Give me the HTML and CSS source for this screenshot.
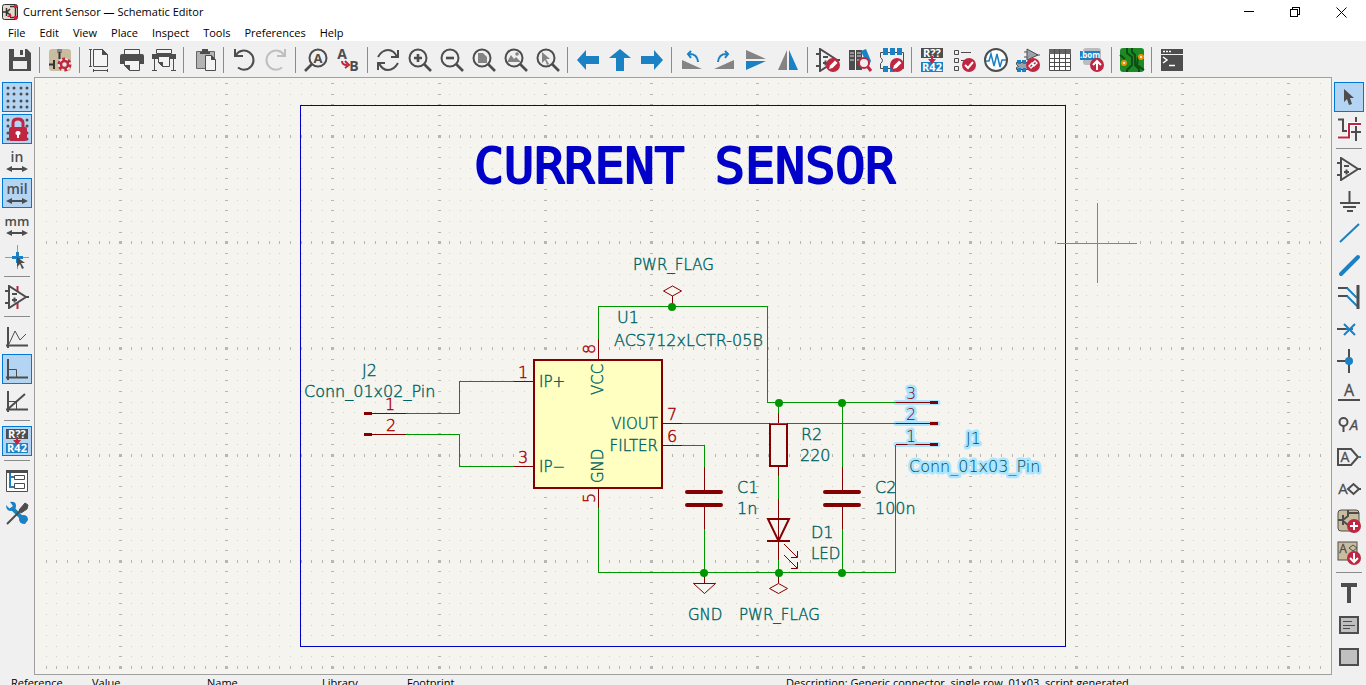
FILE: index.html
```html
<!DOCTYPE html>
<html lang="en">
<head>
<meta charset="utf-8">
<title>Current Sensor — Schematic Editor</title>
<link rel="stylesheet" href="styles.css">
</head>
<body>
<svg class="defs" aria-hidden="true">
  <symbol id="annotate" viewBox="0 0 24 24">
    <rect x="1" y="0" width="22" height="10" fill="#4d4d4d"/><rect x="1" y="14" width="22" height="10" fill="#1a81c4"/>
    <text x="12" y="9" class="i-text i-white" font-size="11">R??</text>
    <text x="12" y="23" class="i-text i-white" font-size="11">R42</text>
    <path d="M11 8h2v3h3l-4 5-4-5h3z" fill="#bf2641"/>
  </symbol>
  <symbol id="opamp" viewBox="0 0 24 24">
    <path d="M4 1v22L21 12zM0 6h4M0 18h4M20 12h4M7 9h5M7 15h5M9.500 12.500v5" class="s"/>
  </symbol>
  <symbol id="lens" viewBox="0 0 24 24">
    <circle cx="10" cy="10" r="8.500" class="s"/><path d="M16 16l7 7" class="s" stroke-width="2.600"/>
  </symbol>
  <symbol id="edit-badge" viewBox="0 0 24 24">
    <circle cx="17" cy="17" r="7" fill="#bf2641"/><path d="M13 21l1-3.500 5-5 2.500 2.500-5 5z" fill="#fff"/>
  </symbol>
  <symbol id="lr" viewBox="0 0 24 24">
    <path d="M4 20h16" class="s"/><path d="M1 20l6-3v6zM23 20l-6-3v6z" fill="#4d4d4d"/>
  </symbol>
</svg>

<header class="titlebar">
  <svg class="app-icon" viewBox="0 0 16 16"><rect x=".5" y=".5" width="15" height="15" rx="2" fill="#e3dacb" stroke="#333"/><path d="M1 8h4M4.500 4v8M5 8l3-3M5 8l4 4M8 2.500h4M8 13.500h4M13.500 4v8" stroke="#333" stroke-width="1.500" fill="none"/><path d="M12 1h3v3h-3zM12 12h3v3h-3zM9 9v4H5z" fill="#d0223f"/></svg>
  <h1 class="title">Current Sensor — Schematic Editor</h1>
  <div class="window-buttons">
    <button class="wbtn" aria-label="Minimize"><svg viewBox="0 0 11 11"><path d="M0 4.500h10"/></svg></button>
    <button class="wbtn" aria-label="Restore"><svg viewBox="0 0 11 11"><path d="M.5 2.500h7v7h-7zM2.500 2.500v-2h7v7h-2"/></svg></button>
    <button class="wbtn" aria-label="Close"><svg viewBox="0 0 11 11"><path d="M.5.5l10 10M10.500.5l-10 10" shape-rendering="auto"/></svg></button>
  </div>
</header>
<nav class="menubar">
  <button>File</button><button>Edit</button><button>View</button><button>Place</button><button>Inspect</button><button>Tools</button><button>Preferences</button><button>Help</button>
</nav>

<div class="toolbar top">
  <button class="tool" aria-label="Save"><svg viewBox="0 0 24 24"><path d="M1 1h18l4 4v18H1z" fill="#4d4d4d"/><path d="M6 1h11v8H6zM5 13h14v8H5z" fill="#efefef"/><path d="M12 2h3v5h-3z" fill="#4d4d4d"/></svg></button>
  <hr>
  <button class="tool" aria-label="Schematic setup"><svg viewBox="0 0 24 24"><rect x="1" y="1" width="22" height="22" rx="3" fill="#cabd9f"/><path d="M9 1h5v4H9z" fill="#888"/><path d="M11.500 4v7M6 12v9M1 16.500h6" stroke="#333" stroke-width="2"/><circle cx="16.500" cy="16.500" r="6.500" fill="#efe9dc"/><circle cx="16.500" cy="16.500" r="5.500" class="teeth"/><circle cx="16.500" cy="16.500" r="3.500" fill="none" stroke="#bf2641" stroke-width="2.500"/></svg></button>
  <hr>
  <button class="tool" aria-label="Page settings"><svg viewBox="0 0 24 24"><path d="M5.500 1.500h9l5 5v12h-14zM14.500 1.500v5h5" fill="#f4f4f4" stroke="#4d4d4d"/><path d="M14 1l6 6h-6z" fill="#4d4d4d"/><path d="M2.500 1v18M1 1.500h3M1 18.500h3M5 22.500h15M5.500 21v3M19.500 21v3" class="s1"/></svg></button>
  <button class="tool" aria-label="Print"><svg viewBox="0 0 24 24"><path d="M4.500 1.500h15v5h-15z" fill="#f4f4f4" stroke="#4d4d4d"/><path d="M2 6h20q2 0 2 2v8h-4v-3H4v3H0V8q0-2 2-2z" fill="#4d4d4d"/><path d="M4.500 12.500h15v10h-10l-5-5z" fill="#f4f4f4" stroke="#4d4d4d"/><path d="M4 17h6v6z" fill="#4d4d4d"/></svg></button>
  <button class="tool" aria-label="Plot"><svg viewBox="0 0 24 24"><path d="M4.500 1.500h15v4h-15z" fill="#f4f4f4" stroke="#4d4d4d"/><path d="M0 6h24v5H0z" fill="#4d4d4d"/><path d="M6.500 8.500h11v10h-7l-4-4z" fill="#f4f4f4" stroke="#4d4d4d"/><path d="M6 14h5v5z" fill="#4d4d4d"/><path d="M2.500 10v13M21.500 10v13M0 22.500h5M19 22.500h5" class="s1"/></svg></button>
  <hr>
  <button class="tool" aria-label="Paste"><svg viewBox="0 0 24 24"><path d="M4.500 3.500h18v17h-18z" fill="#b3b3b3" stroke="#666"/><path d="M10 1h6v3h2v2H8V4h2z" fill="#4d4d4d"/><path d="M13.500 7.500h6l4 4v11h-10z" fill="#f4f4f4" stroke="#4d4d4d"/><path d="M19 7l5 5h-5z" fill="#4d4d4d"/></svg></button>
  <hr>
  <button class="tool" aria-label="Undo"><svg viewBox="0 0 24 24"><path d="M4 7a9.500 9.500 0 1 1 2 12.500M3 1v7h8" class="s"/></svg></button>
  <button class="tool" aria-label="Redo" disabled><svg viewBox="0 0 24 24"><path d="M20 7a9.500 9.500 0 1 0-2 12.500M21 1v7h-8" class="s light"/></svg></button>
  <hr>
  <button class="tool" aria-label="Find"><svg viewBox="0 0 24 24"><circle cx="14" cy="10" r="8.500" class="s"/><path d="M8 16l-7 7" class="s" stroke-width="2.600"/><text x="14" y="15" class="i-text" font-size="13">A</text></svg></button>
  <button class="tool" aria-label="Find and replace"><svg viewBox="0 0 24 24"><text x="6" y="11" class="i-text" font-size="14">A</text><text x="18" y="23" class="i-text" font-size="14">B</text><path d="M6 13q0 4 5 4" fill="none" stroke="#bf2641" stroke-width="2"/><path d="M9 13l4 4-4 3" fill="none" stroke="#bf2641" stroke-width="2"/></svg></button>
  <hr>
  <button class="tool" aria-label="Refresh"><svg viewBox="0 0 24 24"><path d="M2 9Q6 2 12 2t9 7M22 2v7h-7M22 15q-4 7-10 7t-9-7M2 22v-7h7" class="s"/></svg></button>
  <button class="tool" aria-label="Zoom in"><svg viewBox="0 0 24 24"><use href="#lens"/><path d="M10 6v8M6 10h8" class="s" stroke-width="2.500"/></svg></button>
  <button class="tool" aria-label="Zoom out"><svg viewBox="0 0 24 24"><use href="#lens"/><path d="M6 10h8" class="s" stroke-width="2.500"/></svg></button>
  <button class="tool" aria-label="Zoom to page"><svg viewBox="0 0 24 24"><use href="#lens"/><path d="M6 5h5l4 4v6H6z" fill="#848484"/></svg></button>
  <button class="tool" aria-label="Zoom to objects"><svg viewBox="0 0 24 24"><use href="#lens"/><path d="M3 14l4-7 3 4 2-2 5 5z" fill="#848484"/><circle cx="13" cy="6" r="1.800" fill="#848484"/></svg></button>
  <button class="tool" aria-label="Zoom to selection"><svg viewBox="0 0 24 24"><use href="#lens"/><path d="M6 4l8 7h-4l3 5-2 1-2-5-3 3z" fill="#848484"/></svg></button>
  <hr>
  <button class="tool" aria-label="Back"><svg viewBox="0 0 24 24"><path d="M1 12L10 2v6h13v8H10v6z" fill="#1a81c4"/></svg></button>
  <button class="tool" aria-label="Up"><svg viewBox="0 0 24 24"><path d="M12 1l11 9h-7v13H8V10H1z" fill="#1a81c4"/></svg></button>
  <button class="tool" aria-label="Forward"><svg viewBox="0 0 24 24"><path d="M23 12L14 2v6H1v8h13v6z" fill="#1a81c4"/></svg></button>
  <hr>
  <button class="tool" aria-label="Rotate left"><svg viewBox="0 0 24 24"><path d="M2 12l20 9H2z" fill="#848484"/><path d="M8 6q9-1 10 8M11 3L8 6l3 4" class="s blue"/></svg></button>
  <button class="tool" aria-label="Rotate right"><svg viewBox="0 0 24 24"><path d="M22 12L2 21h20z" fill="#848484"/><path d="M16 6q-9-1-10 8M13 3l3 3-3 4" class="s blue"/></svg></button>
  <button class="tool" aria-label="Mirror vertically"><svg viewBox="0 0 24 24"><path d="M2 2l20 9H2z" fill="#848484"/><path d="M2 22l20-9H2z" fill="#1a81c4"/></svg></button>
  <button class="tool" aria-label="Mirror horizontally"><svg viewBox="0 0 24 24"><path d="M11 2v20H2z" fill="#848484"/><path d="M13 2v20h9z" fill="#1a81c4"/></svg></button>
  <hr>
  <button class="tool" aria-label="Symbol editor"><svg viewBox="0 0 24 24"><use href="#opamp"/><use href="#edit-badge"/></svg></button>
  <button class="tool" aria-label="Symbol library browser"><svg viewBox="0 0 24 24"><path d="M1 2h6v20H1zM8 2h6v20H8z" fill="#4d4d4d"/><path d="M2 5h4M2 8h4M9 5h4M9 8h4M2 12h4M9 12h4" stroke="#ddd"/><path d="M13 3l5-2 5 12-3 6z" fill="#1a81c4"/><circle cx="16" cy="15" r="5" fill="#efefef" stroke="#bf2641" stroke-width="2"/><path d="M19.500 18.500L23 23" stroke="#bf2641" stroke-width="3"/></svg></button>
  <button class="tool" aria-label="Footprint editor"><svg viewBox="0 0 24 24"><path d="M.5 4.500h23v16H.5v-5q4-3 0-6z" class="s1"/><path d="M3 0h5v7H3zM10 0h5v7h-5zM17 0h5v7h-5zM3 18h5v6H3zM10 18h5v6h-5z" fill="#1a81c4"/><use href="#edit-badge"/></svg></button>
  <hr>
  <button class="tool" aria-label="Annotate"><svg><use href="#annotate"/></svg></button>
  <button class="tool" aria-label="Electrical rules check"><svg viewBox="0 0 24 24"><path d="M2.500 2.500h4v4h-4zM2.500 10.500h4v4h-4zM2.500 18.500h4v4h-4zM9 4.500h10M9 12.500h4" class="s1"/><circle cx="17" cy="17" r="7" fill="#bf2641"/><path d="M13 17l3 3 5-6" fill="none" stroke="#fff" stroke-width="2"/></svg></button>
  <button class="tool" aria-label="Simulator"><svg viewBox="0 0 24 24"><circle cx="12" cy="12" r="11" fill="#fff" stroke="#4d4d4d" stroke-width="2"/><path d="M2 13h3l2-7 3 12 3-12 3 13 2-7h4" class="blue" fill="none" stroke-width="1.500"/></svg></button>
  <button class="tool" aria-label="Assign footprints"><svg viewBox="0 0 24 24"><path d="M11 1v11l11-5zM8 4h3M8 9h3M20 7h4" fill="#9aa3ad" stroke="#4d4d4d"/><path d="M1 12h4v4H1zM6 12h4v4H6zM1 20h4v4H1zM6 20h4v4H6z" fill="#1a81c4"/><path d="M.5 14.500h12v7H.5v-2l2-1-2-2z" fill="#9aa3ad" stroke="#4d4d4d"/><path d="M2 12h3v4H2zM7 12h3v4H7zM2 20h3v4H2zM7 20h3v4H7z" fill="#1a81c4"/><circle cx="17" cy="17" r="7" fill="#bf2641"/><path d="M13 18l3-3 2 2-3 3zM16 16l3-3 2 2-3 3z" fill="none" stroke="#fff" stroke-width="1.300"/></svg></button>
  <button class="tool" aria-label="Symbol fields table"><svg viewBox="0 0 24 24"><path d="M1.500 1.500h21v21h-21z" fill="#fff" stroke="#4d4d4d"/><path d="M1 1h22v5H1z" fill="#666"/><path d="M6.500 1v22M11.500 1v22M17.500 1v22M1 10.500h22M1 14.500h22M1 18.500h22" stroke="#4d4d4d"/></svg></button>
  <button class="tool" aria-label="Bill of materials"><svg viewBox="0 0 24 24"><rect x="3" y="0" width="18" height="17" rx="3" fill="#b9bdc2"/><path d="M0 3h20v9H0z" fill="#1a81c4"/><text x="10" y="10" class="i-text i-white" font-size="8">.bom</text><circle cx="17" cy="17" r="7" fill="#bf2641"/><path d="M17 22v-8M13 17l4-4 4 4" fill="none" stroke="#fff" stroke-width="2"/></svg></button>
  <hr>
  <button class="tool" aria-label="PCB editor"><svg viewBox="0 0 24 24"><rect width="24" height="24" rx="3" fill="#1d8a26"/><path d="M7 0v5l5 4v8l-5 5v2M12 0v4l3 3v10l4 4v3M0 7l5 4M18 9l-1 8 7 5" stroke="#0e4d14" stroke-width="2" fill="none"/><circle cx="21" cy="9" r="2" fill="#fff" stroke="#f29100" stroke-width="2"/><circle cx="4" cy="15" r="2" fill="#fff" stroke="#f29100" stroke-width="2"/></svg></button>
  <hr>
  <button class="tool" aria-label="Scripting console"><svg viewBox="0 0 24 24"><path d="M1 1h22v22H1z" fill="#4d4d4d"/><path d="M1 6.500h22" stroke="#efefef"/><path d="M3 3.500h2M6 3.500h2M9 3.500h2" stroke="#fff" stroke-width="1.500"/><path d="M3 9l4 3-4 3M9 17.500h6" stroke="#fff" stroke-width="1.500" fill="none"/></svg></button>
</div>

<main class="workspace">
  <div class="toolbar side">
    <button class="tool on" aria-label="Show grid"><svg viewBox="0 0 24 24"><path d="M3 3h0M9 3h0M16 3h0M22 3h0M3 9h0M9 9h0M16 9h0M22 9h0M3 16h0M9 16h0M16 16h0M22 16h0M3 22h0M9 22h0M16 22h0M22 22h0" class="dots"/></svg></button>
    <button class="tool on" aria-label="Grid overrides"><svg viewBox="0 0 24 24"><path d="M3 3h0M9 3h0M16 3h0M22 3h0M3 9h0M22 9h0M3 16h0M22 16h0M3 22h0M22 22h0" class="dots"/><path d="M8 12V6q0-4 5-4t5 4v6" fill="none" stroke="#bf2641" stroke-width="3"/><rect x="4" y="10" width="18" height="14" rx="2" fill="#bf2641"/><path d="M13 14a2 2 0 0 1 1 4v3h-2v-3a2 2 0 0 1 1-4" fill="#fff"/></svg></button>
    <button class="tool" aria-label="Inches"><svg viewBox="0 0 24 24"><text x="12" y="13" class="i-text i-semi" font-size="14">in</text><use href="#lr"/></svg></button>
    <button class="tool on" aria-label="Mils"><svg viewBox="0 0 24 24"><text x="12" y="13" class="i-text i-semi" font-size="14">mil</text><use href="#lr"/></svg></button>
    <button class="tool" aria-label="Millimeters"><svg viewBox="0 0 24 24"><text x="12" y="13" class="i-text i-semi" font-size="13">mm</text><use href="#lr"/></svg></button>
    <button class="tool" aria-label="Full-window crosshair"><svg viewBox="0 0 24 24"><path d="M0 12.500h24M12.500 0v24" stroke="#999"/><path d="M7 12.500h11M12.500 7v11" stroke="#1a81c4" stroke-width="3"/><path d="M12 12l8 6h-4l3 5-2 1-2-5-3 3z" fill="#4d4d4d"/></svg></button>
    <hr>
    <button class="tool" aria-label="Show hidden pins"><svg viewBox="0 0 24 24"><path d="M12.500 1v6M12.500 18v6" stroke="#bf2641" stroke-width="2"/><use href="#opamp"/></svg></button>
    <hr>
    <button class="tool" aria-label="Free angle"><svg viewBox="0 0 24 24"><path d="M3 2v21M1 20.500h22" class="s"/><path d="M4 19l6-13 5 9 6-6" class="s1"/></svg></button>
    <button class="tool on" aria-label="Right angle"><svg viewBox="0 0 24 24"><path d="M3 2v21M1 20.500h22" class="s"/><path d="M4 12.500h7.500V20" class="s1"/></svg></button>
    <button class="tool" aria-label="45 degree angle"><svg viewBox="0 0 24 24"><path d="M3 2v21M1 20.500h22M3 20L20 5" class="s"/><path d="M4 12.500h7.500V20" class="s1"/></svg></button>
    <hr>
    <button class="tool on" aria-label="Annotate automatically"><svg><use href="#annotate"/></svg></button>
    <hr>
    <button class="tool" aria-label="Hierarchy navigator"><svg viewBox="0 0 24 24"><path d="M1.500 1.500h21v21h-21z" fill="#fff" stroke="#4d4d4d"/><path d="M1 1h22v3H1z" fill="#4d4d4d"/><path d="M5 4v14h4M5 8h4" class="s blue"/><path d="M9.500 6.500h10v4h-10zM9.500 14.500h10v5h-10z" class="s1"/></svg></button>
    <button class="tool" aria-label="Properties manager"><svg viewBox="0 0 24 24"><path d="M7 7l12 12" stroke="#1a81c4" stroke-width="4"/><path d="M1 4l3.500 3.500L8 5 5 1q6-1 6 4 0 5-5 5-5 0-5-6zM14 18q0-4 4-4 5 0 5 5l-3 4q-6 0-6-5" fill="#1a81c4"/><path d="M2 23L15 10" stroke="#4d4d4d" stroke-width="2"/><path d="M14 9l6-7 3 2-1 4-6 4z" fill="#4d4d4d" stroke="#4d4d4d"/></svg></button>
  </div>

  <section class="canvas" aria-label="Schematic">
    <svg class="sheet">
      <path id="grid-minor" fill="#d0d0cd" shape-rendering="crispEdges"/>
      <path id="grid-major" fill="#b6b6b4" shape-rendering="crispEdges"/>
      <g transform="translate(-35 -78)">
        <rect x="300.500" y="105.500" width="765" height="541" fill="none" stroke="#0000c8"/>
        <text x="474" y="183" class="heading">CURRENT SENSOR</text>

        <g class="halo">
          <path d="M896 402.500h42M896 423.500h42M896 444.500h42"/>
        </g>
        <rect x="534" y="360" width="128" height="128" fill="#ffffc2" stroke="#840000" stroke-width="2"/>
        <g class="wire">
          <path d="M598.500 340V306.500H767.500V402.500H896M514 381.500H459.500V413.500H406M406 434.500H459.500V466.500H514M682 423.500H896M682 445.500H704.500V467M704.500 529V572.500M598.500 508V572.500H895.500V444.500M778.500 403V413M778.500 476V499M778.500 560V572M842.500 403V467M842.500 529V572"/>
        </g>
        <g class="part">
          <path d="M598.500 339V360M514 381.500H534M514 466.500H534M598.500 488V508M662 423.500H682M662 445.500H682M364 413.500H406M364 434.500H406M896 402.500H938M896 423.500H938M896 444.500H938"/>
          <path d="M672.500 306V296M778.500 413V424M778.500 466V476M704.500 467V491M704.500 505V529M842.500 467V491M842.500 505V529M778.500 499V560M704.500 573V583M778.500 573V583"/>
          <g class="slant">
            <path d="M672.500 286l9 5-9 5-9-5zM778.500 583.500l9 5-9 5-9-5zM693.500 583.500h22l-11 10z"/>
            <path d="M784 544l13 13M797.500 551v6.500H791M784 555l13 13M797.500 562v6.500H791"/>
            <path d="M768 519h21l-10.500 22zM767 541h23" stroke-width="2"/>
            <path d="M687 492h34M687 505h34M825 492h34M825 505h34" stroke-width="4" stroke-linecap="round"/>
          </g>
          <rect x="770" y="424" width="17" height="42" fill="#f5f4ef" stroke-width="2"/>
          <path d="M364 413.500h8M364 434.500h8M930 402.500h8M930 423.500h8M930 444.500h8" stroke-width="3"/>
        </g>
        <path d="M770 423.500h17" stroke="#009600"/>
        <g fill="#009600"><circle cx="672" cy="307" r="4"/><circle cx="779" cy="403" r="4"/><circle cx="842" cy="403" r="4"/><circle cx="704" cy="573" r="4"/><circle cx="779" cy="573" r="4"/><circle cx="842" cy="573" r="4"/></g>

        <g class="label">
          <text x="633" y="270" class="small">PWR_FLAG</text>
          <text x="617" y="323">U1</text><text x="614" y="346">ACS712xLCTR-05B</text>
          <text x="362" y="376">J2</text><text x="304" y="397">Conn_01x02_Pin</text>
          <text x="539" y="387" class="small">IP+</text><text x="539" y="472" class="small">IP−</text>
          <text x="658" y="429" class="small end">VIOUT</text><text x="658" y="451" class="small end">FILTER</text>
          <text transform="translate(603 395) rotate(-90)" class="small">VCC</text>
          <text transform="translate(603 483) rotate(-90)" class="small">GND</text>
          <text x="801" y="440">R2</text><text x="800" y="461">220</text>
          <text x="737" y="493">C1</text><text x="737" y="514">1n</text>
          <text x="875" y="493">C2</text><text x="875" y="514">100n</text>
          <text x="811" y="538">D1</text><text x="811" y="559" class="small">LED</text>
          <text x="688" y="620" class="small">GND</text><text x="739" y="620" class="small">PWR_FLAG</text>
          <text x="966" y="444" class="selected">J1</text><text x="909" y="472" class="selected">Conn_01x03_Pin</text>
        </g>
        <g class="label pin">
          <text x="518" y="378">1</text><text x="518" y="463">3</text>
          <text x="385" y="410">1</text><text x="386" y="431">2</text>
          <text x="667" y="420">7</text><text x="667" y="442">6</text>
          <text transform="translate(595 354) rotate(-90)">8</text>
          <text transform="translate(595 503) rotate(-90)">5</text>
          <text x="906" y="399" class="selected">3</text><text x="906" y="420" class="selected">2</text><text x="906" y="442" class="selected">1</text>
        </g>
        <path d="M1057 243.500h80M1097.500 203v80" stroke="#848484" shape-rendering="crispEdges"/>
      </g>
    </svg>
  </section>

  <div class="toolbar side">
    <button class="tool on" aria-label="Select"><svg viewBox="0 0 24 24"><path d="M7 4l10 9h-4l2 6-3 1-2-6-3 3z" fill="#4d4d4d"/></svg></button>
    <button class="tool" aria-label="Highlight net"><svg viewBox="0 0 24 24"><path d="M1 2.500h5V14h5M19 0v24M14 8h10M14 15h10" class="s"/><path d="M1 20.500h11V7h12" fill="none" stroke="#fff" stroke-width="4"/><path d="M1 20.500h11V7h12" fill="none" stroke="#bf2641" stroke-width="2"/></svg></button>
    <hr>
    <button class="tool" aria-label="Add symbol"><svg><use href="#opamp"/></svg></button>
    <button class="tool" aria-label="Add power"><svg viewBox="0 0 24 24"><path d="M12.500 2v12M3 14h20M6 18h13M10 22h6" class="s"/></svg></button>
    <button class="tool" aria-label="Draw wire"><svg viewBox="0 0 24 24"><path d="M3 21L22 3" class="s blue"/></svg></button>
    <button class="tool" aria-label="Draw bus"><svg viewBox="0 0 24 24"><path d="M4 21L21 4" class="s blue" stroke-width="4" stroke-linecap="round"/></svg></button>
    <button class="tool" aria-label="Bus entry"><svg viewBox="0 0 24 24"><path d="M1 3h10M1 11h10" class="s"/><path d="M10 3l10 10M10 11l10 10" class="s blue"/><path d="M21 0v24" class="s" stroke-width="3"/></svg></button>
    <button class="tool" aria-label="No connect"><svg viewBox="0 0 24 24"><path d="M0 12h12" class="s"/><path d="M7 7l11 11M18 7L7 18M9 12h7" class="s blue"/></svg></button>
    <button class="tool" aria-label="Junction"><svg viewBox="0 0 24 24"><path d="M0 12h12M12 0v24" class="s"/><circle cx="12" cy="12" r="4" fill="#1a81c4"/></svg></button>
    <button class="tool" aria-label="Net label"><svg viewBox="0 0 24 24"><text x="12" y="15" class="i-text i-reg" font-size="16">A</text><path d="M1 19h22" class="s"/></svg></button>
    <button class="tool" aria-label="Directive label"><svg viewBox="0 0 24 24"><circle cx="6.500" cy="9" r="4" class="s"/><path d="M6.500 13v6" class="s"/><text x="17" y="17" class="i-text i-reg" font-size="15" font-style="italic">A</text></svg></button>
    <button class="tool" aria-label="Global label"><svg viewBox="0 0 24 24"><path d="M1 4h13l7 8-7 8H1z" class="s"/><path d="M22 12h2" class="s blue"/><text x="8" y="17" class="i-text i-reg" font-size="14">A</text></svg></button>
    <button class="tool" aria-label="Hierarchical label"><svg viewBox="0 0 24 24"><text x="6" y="17" class="i-text i-reg" font-size="15">A</text><path d="M11 12l5.500-5 5.500 5-5.500 5zM22 12h2" class="s"/></svg></button>
    <button class="tool" aria-label="Add sheet"><svg viewBox="0 0 24 24"><rect x="1" y="1" width="21" height="21" rx="3" fill="#cabd9f" stroke="#4d4d4d"/><path d="M1 11h5M6 6v10M6 11l5-4V1M6 12l5 4M11 4h11" class="s"/><circle cx="17" cy="17" r="7" fill="#bf2641"/><path d="M17 13v8M13 17h8" stroke="#fff" stroke-width="2"/></svg></button>
    <button class="tool" aria-label="Import sheet pin"><svg viewBox="0 0 24 24"><rect x="1" y="1" width="19" height="18" fill="#cabd9f" stroke="#4d4d4d"/><text x="6" y="12" class="i-text i-reg" font-size="12">A</text><path d="M12 7l4-3 4 3-4 3z" class="s1"/><circle cx="17" cy="17" r="7" fill="#bf2641"/><path d="M17 12v8M13 17l4 4 4-4" fill="none" stroke="#fff" stroke-width="2"/></svg></button>
    <hr>
    <button class="tool" aria-label="Text"><svg viewBox="0 0 24 24"><path d="M4 2h16v4h-6v16h-4V6H4z" fill="#4d4d4d"/></svg></button>
    <button class="tool" aria-label="Text box"><svg viewBox="0 0 24 24"><rect x="3" y="4" width="18" height="16" fill="#c0c0c0" stroke="#4d4d4d" stroke-width="2"/><path d="M6 8.500h9M6 12.500h12M6 15.500h7" class="s1"/></svg></button>
    <button class="tool" aria-label="Rectangle"><svg viewBox="0 0 24 24"><rect x="3" y="4" width="18" height="16" fill="#c0c0c0" stroke="#4d4d4d" stroke-width="2"/></svg></button>
  </div>
</main>

<footer class="statusbar">
  <span>Reference</span><span>Value</span><span>Name</span><span>Library</span><span>Footprint</span><span>Description: Generic connector, single row, 01x03, script generated</span>
</footer>
<script src="grid.js"></script>
</body>
</html>
```
FILE: styles.css
```css
* { box-sizing: border-box; }
body {
  margin: 0;
  height: 100vh;
  display: flex;
  flex-direction: column;
  overflow: hidden;
  background: #f0f0f0;
  color: #000;
  font: 12px/16px "Open Sans", "Noto Sans", sans-serif;
}
button { margin: 0; padding: 0; border: 0; background: none; color: inherit; font: inherit; }
.defs { display: none; }

.titlebar { display: flex; align-items: center; flex: none; height: 24px; padding: 0 2px; background: #fff; }
.app-icon { width: 16px; height: 16px; margin-right: 5px; }
.title { margin: 0; font-size: 11px; font-weight: 400; }
.window-buttons { display: flex; margin-left: auto; }
.wbtn { display: grid; place-items: center; width: 46px; height: 20px; }
.wbtn svg { width: 11px; height: 11px; fill: none; stroke: #000; shape-rendering: crispEdges; }

.menubar { display: flex; flex: none; gap: 14px; height: 17px; padding-left: 8px; background: #fff; font-size: 11px; }

.toolbar { display: flex; flex: none; background: #f0f0f0; }
.toolbar hr { margin: 0; border: 0; align-self: center; background: #8c8c8c; }
.top { height: 36px; padding: 3px 4px 1px; }
.top hr { width: 1px; height: 26px; margin: 0 4px 0 3px; }
.side { flex-direction: column; width: 34px; padding: 3px 1px 0; }
.side hr { width: 26px; height: 1px; margin: 3px 0 4px; }
.tool { display: grid; place-items: center; flex: none; width: 30px; height: 30px; margin: 1px; border: 1px solid transparent; }
.tool.on { border-color: #0078d7; background: #b3d5f3; }
.tool svg { width: 24px; height: 24px; overflow: visible; }

.s { fill: none; stroke: #4d4d4d; stroke-width: 2; }
.s[stroke-width="2.600"], .s[stroke-width="2.500"] { stroke-width: 2.6; }
.s[stroke-width="3"] { stroke-width: 3; }
.s[stroke-width="4"] { stroke-width: 4; }
.s1 { fill: none; stroke: #4d4d4d; stroke-width: 1; }
.s.blue, .blue { stroke: #1a81c4; }
.s.light { stroke: #bfbfbf; }
.teeth { fill: none; stroke: #bf2641; stroke-width: 3; stroke-dasharray: 2.8 2.96; }
.dots { stroke: #4d4d4d; stroke-width: 3; stroke-linecap: round; }
.i-text { font-family: "Open Sans", sans-serif; font-weight: 700; text-anchor: middle; fill: #4d4d4d; }
.i-semi { font-weight: 600; }
.i-reg { font-weight: 400; stroke: #4d4d4d; stroke-width: .3px; }
.i-white { fill: #fff; }

.workspace { display: flex; flex: 1; min-height: 0; }
.workspace .toolbar { border-top: 1px solid #f0f0f0; }
.canvas { flex: 1; min-width: 0; border: 1px solid #a0a0a0; background: #f5f4ef; overflow: hidden; }
.sheet { display: block; width: 100%; height: 100%; }

.wire { fill: none; stroke: #009600; shape-rendering: crispEdges; }
.part { fill: none; stroke: #840000; shape-rendering: crispEdges; }
.slant { shape-rendering: auto; }
.halo { fill: none; stroke: #ace5ff; stroke-width: 5; stroke-linecap: round; }
.heading { font: 400 50px "DejaVu Sans Mono", monospace; fill: #0000c8; stroke: #0000c8; stroke-width: 2px; stroke-linejoin: round; }
.label { font: 200 16px "DejaVu Sans Light", "DejaVu Sans", sans-serif; fill: #006464; stroke: #006464; stroke-width: .4px; }
.label .small { font-size: 15px; }
.label .end { text-anchor: end; }
.pin { fill: #a90000; stroke: #a90000; }
.label .selected { fill: #004c50; stroke: #ace5ff; stroke-width: 5px; stroke-linejoin: round; paint-order: stroke; }
.pin .selected { fill: #900000; }

.statusbar {
  display: grid;
  grid-template-columns: 81px 115px 115px 85px 379px 1fr;
  flex: none;
  height: 10px;
  padding-left: 11px;
  overflow: hidden;
  white-space: nowrap;
  font-size: 11px;
}
```
FILE: grid.js
```js
// Fills the sheet with grid dots; every tenth row and column is emphasised.
(function () {
  var step = 10.62, firstX = 85.5, firstY = 58.5;
  var sheet = document.querySelector('.sheet');
  var minor = '', major = '';
  function box(x, y, w, h) {
    return 'M' + x + ' ' + y + 'h' + w + 'v' + h + 'h' + -w + 'z';
  }
  function draw() {
    minor = major = '';
    for (var r = -5; firstY + r * step < sheet.clientHeight; r++) {
      for (var c = -7; firstX + c * step < sheet.clientWidth; c++) {
        var x = Math.floor(firstX + c * step), y = Math.floor(firstY + r * step);
        var bigX = c % 10 === 0, bigY = r % 10 === 0;
        if (bigX && bigY) major += box(x - 1, y - 1, 3, 3);
        else if (bigX) major += box(x - 1, y, 3, 1);
        else if (bigY) major += box(x, y - 1, 1, 3);
        else minor += box(x, y, 1, 1);
      }
    }
    document.getElementById('grid-minor').setAttribute('d', minor);
    document.getElementById('grid-major').setAttribute('d', major);
  }
  draw();
  window.addEventListener('resize', draw);
})();
```
